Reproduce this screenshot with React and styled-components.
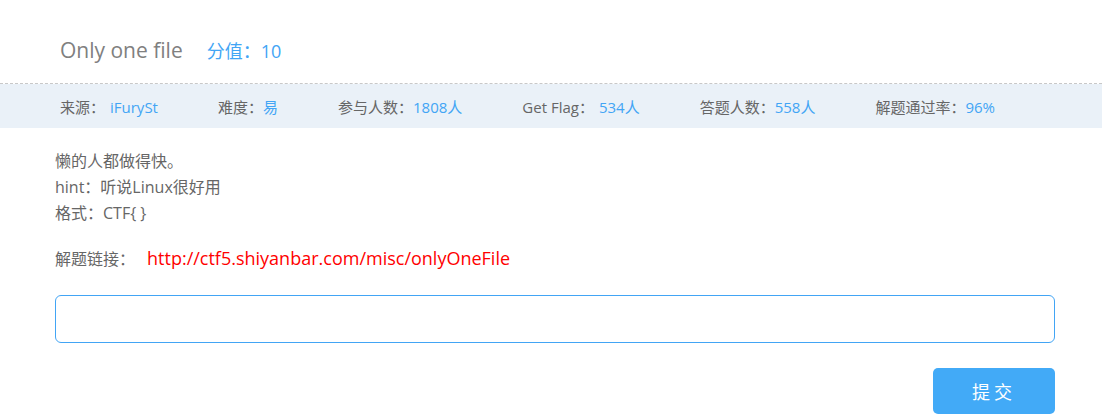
import React from 'react';
import styled, { createGlobalStyle } from 'styled-components';

const GlobalStyle = createGlobalStyle`
  body {
    margin: 0;
    background: #fff;
    font-family: "Open Sans", "Noto Sans CJK SC", sans-serif;
  }
`;

const stats = [
  { label: '来源：', value: 'iFurySt', gap: 5 },
  { label: '难度：', value: '易' },
  { label: '参与人数：', value: '1808人' },
  { label: 'Get Flag：', value: '534人', gap: 5 },
  { label: '答题人数：', value: '558人' },
  { label: '解题通过率：', value: '96%' }
];

const App = () => {
  return (
    <Page>
      <GlobalStyle />
      <Header>
        <Title>Only one file</Title>
        <Points>分值：10</Points>
      </Header>
      <StatsBar>
        {stats.map(s => (
          <Stat key={s.label}>
            {s.label}
            <StatValue $gap={s.gap}>{s.value}</StatValue>
          </Stat>
        ))}
      </StatsBar>
      <Body>
        <Desc>
          懒的人都做得快。
          <br />
          hint：听说Linux很好用
          <br />
          格式：CTF{'{ }'}
        </Desc>
        <LinkRow>
          解题链接：<Link>http://ctf5.shiyanbar.com/misc/onlyOneFile</Link>
        </LinkRow>
        <FlagInput />
        <Actions>
          <SubmitButton>提交</SubmitButton>
        </Actions>
      </Body>
    </Page>
  );
};

const Page = styled.div`
  width: 1102px;
  height: 420px;
  overflow: hidden;
`;

const Header = styled.div`
  display: flex;
  align-items: baseline;
  height: 84px;
  padding: 36px 0 0 60px;
  box-sizing: border-box;
  border-bottom: 1px dashed #c8c8c8;
`;

const Title = styled.span`
  font-size: 21px;
  color: #808080;
`;

const Points = styled.span`
  margin-left: 24px;
  font-size: 18px;
  color: #42a5f5;
`;

const StatsBar = styled.div`
  display: flex;
  align-items: center;
  height: 44px;
  padding-left: 60px;
  background: #eaf1f8;
  gap: 60px;
`;

const Stat = styled.div`
  font-size: 15px;
  color: #666;
`;

const StatValue = styled.span`
  margin-left: ${p => p.$gap || 0}px;
  color: #42a5f5;
`;

const Body = styled.div`
  padding: 20px 47px 0 55px;
`;

const Desc = styled.div`
  font-size: 16px;
  line-height: 26px;
  color: #666;
`;

const LinkRow = styled.div`
  margin-top: 20px;
  font-size: 16px;
  line-height: 26px;
  color: #666;
`;

const Link = styled.a`
  margin-left: 12px;
  font-size: 18px;
  line-height: 1;
  color: #ff0000;
  text-decoration: none;
  cursor: pointer;
`;

const FlagInput = styled.input`
  display: block;
  width: 100%;
  height: 48px;
  margin-top: 23px;
  box-sizing: border-box;
  border: 1px solid #42a5f5;
  border-radius: 6px;
  outline: none;
  padding: 0 12px;
  font-size: 16px;
`;

const Actions = styled.div`
  display: flex;
  justify-content: flex-end;
  margin-top: 25px;
`;

const SubmitButton = styled.button`
  width: 122px;
  height: 46px;
  border: none;
  border-radius: 5px;
  background: #42aaf7;
  color: #fff;
  font-size: 18px;
  letter-spacing: 4px;
  font-family: "Noto Sans CJK SC", sans-serif;
  cursor: pointer;
`;

export default App;
